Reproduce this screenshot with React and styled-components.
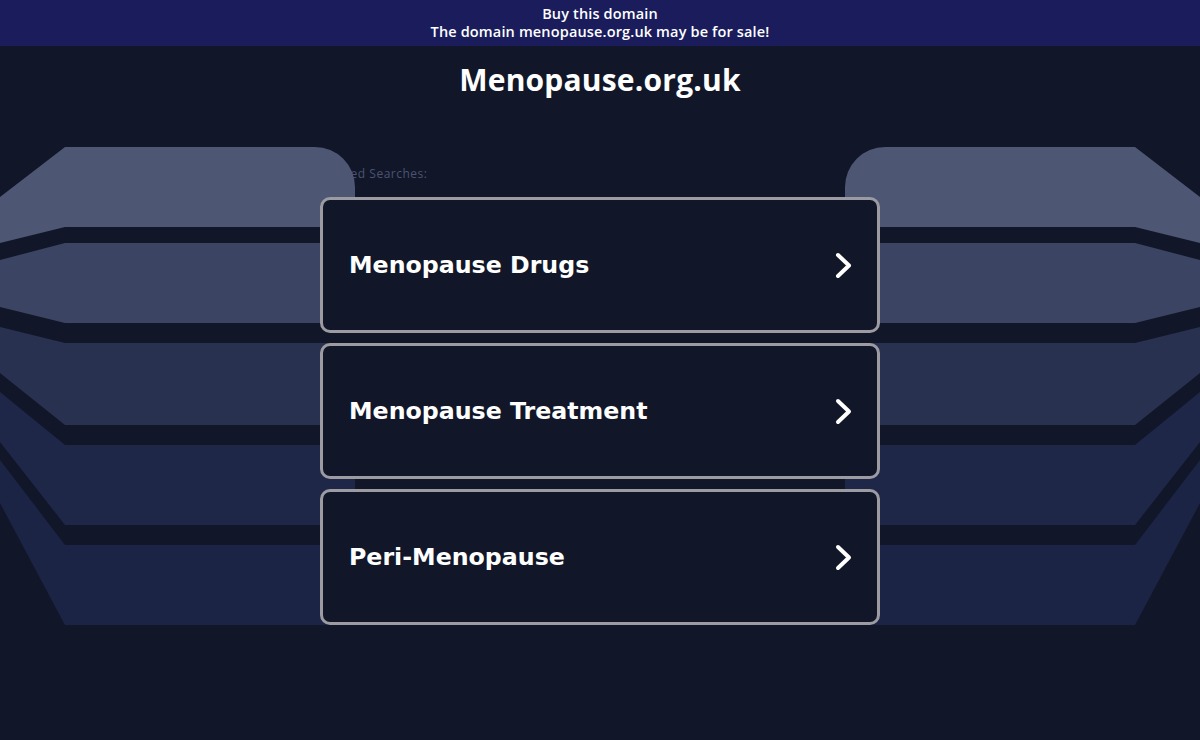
import React from "react";
import styled, { createGlobalStyle } from "styled-components";

const GlobalStyle = createGlobalStyle`
  html, body {
    margin: 0;
    padding: 0;
    background: #111729;
  }
  * {
    box-sizing: border-box;
  }
`;

const Page = styled.div`
  min-height: 100vh;
  background: #111729;
  font-family: "Open Sans", "Noto Sans", sans-serif;
  color: #ffffff;
`;

const Banner = styled.div`
  height: 46px;
  background: #1a1c5b;
  display: flex;
  flex-direction: column;
  align-items: center;
  justify-content: center;
  font-size: 14.5px;
  font-weight: 600;
  line-height: 18px;
  letter-spacing: 0.15px;
  padding-bottom: 1px;
`;

const Title = styled.h1`
  margin: 0;
  padding-top: 19px;
  height: 50px;
  text-align: center;
  font-size: 30px;
  line-height: 30px;
  font-weight: 700;
  letter-spacing: 0.2px;
`;

const Main = styled.section`
  position: relative;
  padding-top: 71px;
  padding-bottom: 60px;
`;

const Decoration = styled.div`
  position: absolute;
  top: 51px;
  left: 0;
  right: 0;
  height: 478px;
  display: flex;
  justify-content: space-between;
  z-index: 1;
  pointer-events: none;
`;

const Wing = styled.svg`
  display: block;
  width: 355px;
  height: 478px;
  transform: ${(p) => (p.$flip ? "scaleX(-1)" : "none")};
`;

const Column = styled.div`
  position: relative;
  width: 560px;
  margin: 0 auto;
`;

const Label = styled.div`
  position: relative;
  z-index: 0;
  font-size: 12px;
  line-height: 14px;
  letter-spacing: 0.5px;
  color: #4c5372;
  margin-bottom: 16px;
`;

const List = styled.div`
  position: relative;
  z-index: 2;
  display: flex;
  flex-direction: column;
  gap: 10px;
`;

const Card = styled.a`
  display: flex;
  align-items: center;
  justify-content: space-between;
  height: 136px;
  padding: 0 24px 0 26px;
  background: #111729;
  border: 3px solid #9b9ba1;
  border-radius: 10px;
  color: #ffffff;
  text-decoration: none;
  cursor: pointer;
`;

const CardText = styled.span`
  font-family: "DejaVu Sans", Verdana, sans-serif;
  font-weight: 700;
  font-size: 23.7px;
`;

const Chevron = () => (
  <svg width="18" height="27" viewBox="0 0 18 27">
    <polyline
      points="3,3 14,13.5 3,24"
      fill="none"
      stroke="#ffffff"
      strokeWidth="4"
      strokeLinecap="round"
      strokeLinejoin="round"
    />
  </svg>
);

const bands = [
  { d: "M0,50 L65,0 L315,0 A40,40 0 0 1 355,40 L355,80 L65,80 L0,96 Z", fill: "#4d5673" },
  { d: "M0,113 L65,96 L355,96 L355,176 L65,176 L0,160 Z", fill: "#3b4462" },
  { d: "M0,180 L65,196 L355,196 L355,278 L65,278 L0,226 Z", fill: "#293151" },
  { d: "M0,245 L65,298 L355,298 L355,378 L65,378 L0,295 Z", fill: "#1f2749" },
  { d: "M0,313 L65,398 L355,398 L355,478 L65,478 L0,356 Z", fill: "#1c2446" },
];

const WingShape = ({ flip }) => (
  <Wing $flip={flip} viewBox="0 0 355 478">
    {bands.map((b, i) => (
      <path key={i} d={b.d} fill={b.fill} />
    ))}
  </Wing>
);

const searches = ["Menopause Drugs", "Menopause Treatment", "Peri-Menopause"];

export default function App() {
  return (
    <Page>
      <GlobalStyle />
      <Banner>
        <div>Buy this domain</div>
        <div>The domain menopause.org.uk may be for sale!</div>
      </Banner>
      <Title>Menopause.org.uk</Title>
      <Main>
        <Decoration>
          <WingShape />
          <WingShape flip />
        </Decoration>
        <Column>
          <Label>Related Searches:</Label>
          <List>
            {searches.map((s) => (
              <Card key={s}>
                <CardText>{s}</CardText>
                <Chevron />
              </Card>
            ))}
          </List>
        </Column>
      </Main>
    </Page>
  );
}
